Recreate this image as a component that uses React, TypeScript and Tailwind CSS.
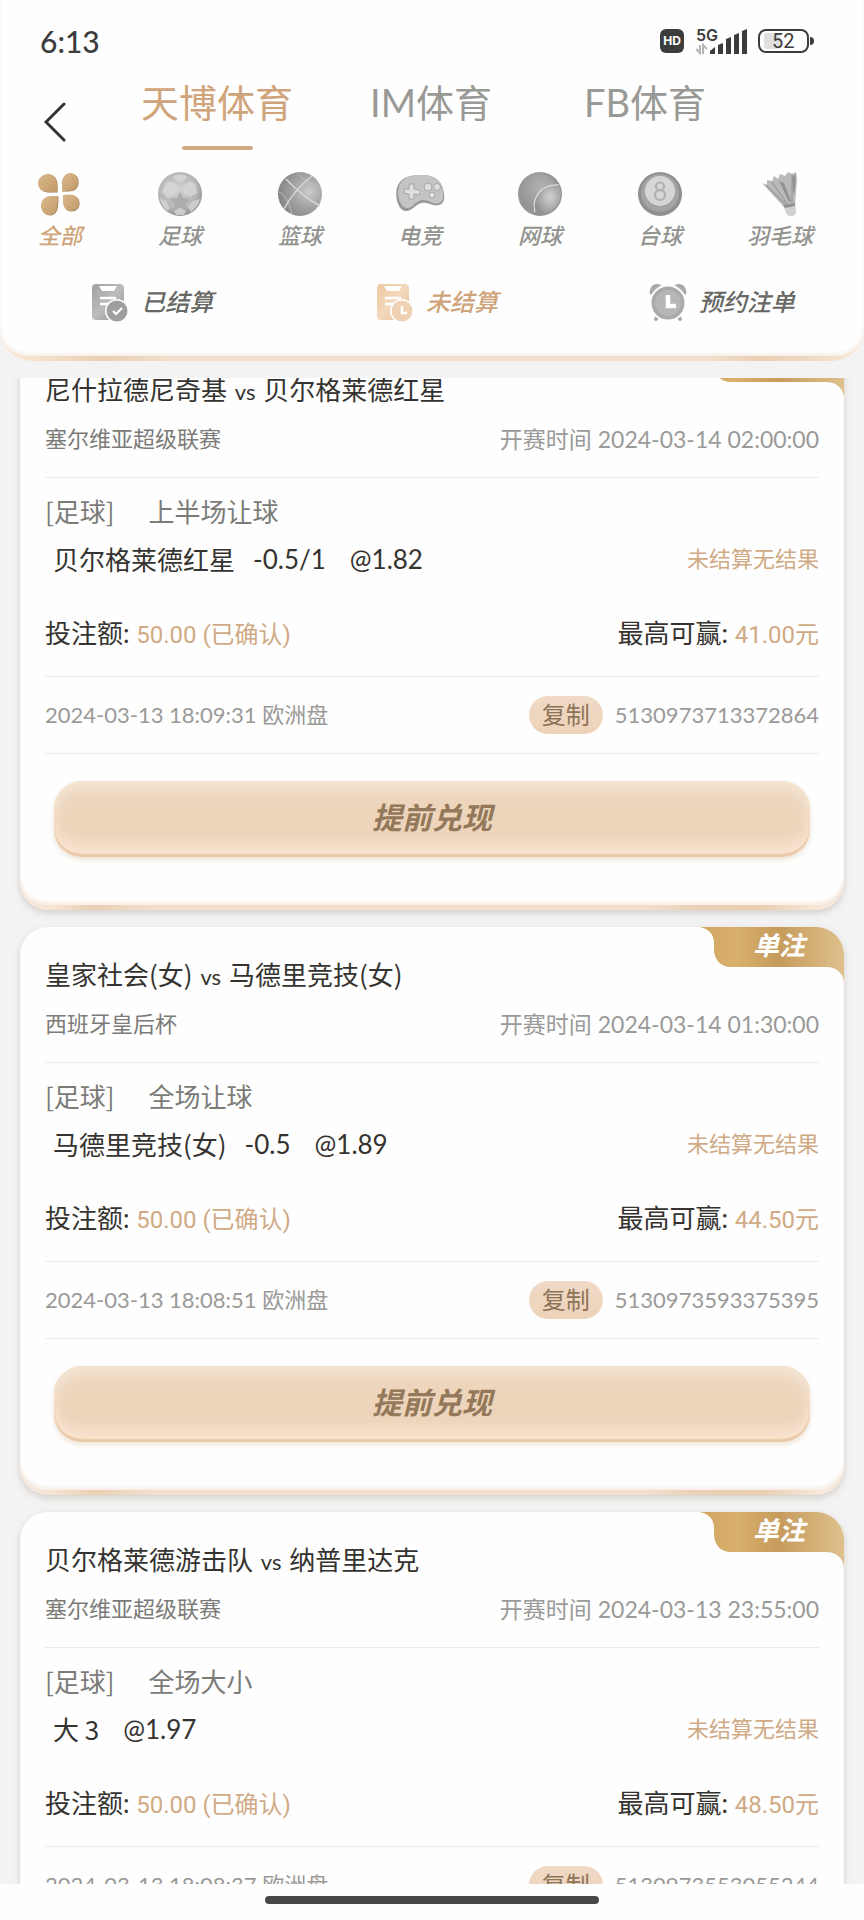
import React, { useState } from 'react';

type Bet = {
    id: string;
    home: string;
    away: string;
    league: string;
    kickoff: string;
    market: string;
    pick: string;
    handicap?: string;
    odds: string;
    stake: string;
    maxWin: string;
    placedAt: string;
};

const bets: Bet[] = [
    {
        id: '5130973713372864',
        home: '尼什拉德尼奇基',
        away: '贝尔格莱德红星',
        league: '塞尔维亚超级联赛',
        kickoff: '2024-03-14 02:00:00',
        market: '上半场让球',
        pick: '贝尔格莱德红星',
        handicap: '-0.5/1',
        odds: '@1.82',
        stake: '50.00',
        maxWin: '41.00',
        placedAt: '2024-03-13 18:09:31',
    },
    {
        id: '5130973593375395',
        home: '皇家社会(女)',
        away: '马德里竞技(女)',
        league: '西班牙皇后杯',
        kickoff: '2024-03-14 01:30:00',
        market: '全场让球',
        pick: '马德里竞技(女)',
        handicap: '-0.5',
        odds: '@1.89',
        stake: '50.00',
        maxWin: '44.50',
        placedAt: '2024-03-13 18:08:51',
    },
    {
        id: '5130973553055244',
        home: '贝尔格莱德游击队',
        away: '纳普里达克',
        league: '塞尔维亚超级联赛',
        kickoff: '2024-03-13 23:55:00',
        market: '全场大小',
        pick: '大 3',
        odds: '@1.97',
        stake: '50.00',
        maxWin: '48.50',
        placedAt: '2024-03-13 18:08:37',
    },
];

// Shared gradients, referenced by id from the icons below
const IconDefs = () => (
    <svg width="0" height="0" className="absolute" aria-hidden="true">
        <defs>
            <radialGradient id="ball" cx="0.45" cy="0.4" r="0.62">
                <stop offset="0" stopColor="#d2d2d2" />
                <stop offset="0.7" stopColor="#b6b6b6" />
                <stop offset="1" stopColor="#8e8e8e" />
            </radialGradient>
            <radialGradient id="ballDark" cx="0.7" cy="0.45" r="0.7">
                <stop offset="0" stopColor="#cccccc" />
                <stop offset="0.5" stopColor="#a4a4a4" />
                <stop offset="1" stopColor="#848484" />
            </radialGradient>
            <radialGradient id="tennis" cx="0.6" cy="0.4" r="0.6">
                <stop offset="0" stopColor="#d2d2d2" />
                <stop offset="1" stopColor="#929292" />
            </radialGradient>
            <linearGradient id="petal" x1="0" y1="0" x2="1" y2="1">
                <stop offset="0" stopColor="#dab88c" />
                <stop offset="1" stopColor="#c29a68" />
            </linearGradient>
            <linearGradient id="grayFill" x1="0" y1="0" x2="1" y2="1">
                <stop offset="0" stopColor="#a0a0a0" />
                <stop offset="0.5" stopColor="#bcbcbc" />
                <stop offset="1" stopColor="#929292" />
            </linearGradient>
            <linearGradient id="goldFill" x1="0" y1="0" x2="1" y2="1">
                <stop offset="0" stopColor="#ecc8a0" />
                <stop offset="0.5" stopColor="#f3d9bc" />
                <stop offset="1" stopColor="#e6bf94" />
            </linearGradient>
            <linearGradient id="badgeFill" x1="0" y1="0" x2="1" y2="0">
                <stop offset="0" stopColor="#cfa661" />
                <stop offset="0.25" stopColor="#d8b06c" />
                <stop offset="0.55" stopColor="#c69b5c" />
                <stop offset="1" stopColor="#dec08c" />
            </linearGradient>
        </defs>
    </svg>
);

const Icons = {
    All: () => (
        <svg viewBox="0 0 44 44" className="size-11">
            <g fill="#9a7a50" transform="translate(0.6 0.6)">
                <path d="M19 20H10C4 20 0 16 0 11C0 6 5 2 10 2C16 2 19 7 19 13Z" />
                <path d="M23.500 19V11C24 5 28 1 32 1C37 1 40 5 40 9.500C40 16 36 19 29 19Z" />
                <path d="M20 24L19.500 33C19 39 16 43 12 43C7 43 3 39 3 34C3 27 8 24 14 24Z" />
                <path d="M25 23L31 22.500C37 22.500 41 26 41 31C41 36 37 39 33 39C28 39 25 35 25 29Z" />
            </g>
            <g fill="url(#petal)">
                <path d="M19 20H10C4 20 0 16 0 11C0 6 5 2 10 2C16 2 19 7 19 13Z" />
                <path d="M24 19V11C24 5 28 1 32 1C37 1 40 5 40 9.500C40 16 36 19 29 19Z" />
                <path d="M20 24L19.500 33C19 39 16 43 12 43C7 43 3 39 3 34C3 27 8 24 14 24Z" />
                <path d="M25 23L31 22.500C37 22.500 41 26 41 31C41 36 37 39 33 39C28 39 25 35 25 29Z" />
            </g>
        </svg>
    ),
    Football: () => (
        <svg viewBox="0 0 44 44" className="size-11">
            <circle cx="22" cy="22" r="22" fill="url(#ball)" />
            <g fill="#d9d9d9" opacity="0.75">
                <path d="M8 11Q12 8 16 11L20 15L18 22L10 26L4 20Z" />
                <path d="M25 15L31 9Q36 10 38 14L39 21L32 25L26 22Z" />
                <path d="M15 4Q22 1 29 4L27 8L22 10L17 8Z" />
                <path d="M2 26L8 29L12 37L9 39Q3 33 2 26Z" />
                <path d="M30 35L35 29L42 27Q40 35 33 40Z" />
                <path d="M16 39L22 36L28 39L26 43H18Z" />
            </g>
            <path d="M22 20L25 26L32 27L27 32L28 38L22 35L16 38L17 32L12 27L19 26Z" fill="#acacac" />
        </svg>
    ),
    Basketball: () => (
        <svg viewBox="0 0 44 44" className="size-11">
            <circle cx="22" cy="22" r="22" fill="url(#ballDark)" />
            <g fill="none" stroke="#d8d8d8">
                <path d="M34 4Q16 18 6 37" strokeWidth="1.500" />
                <path d="M8 7Q24 24 42 34" strokeWidth="1.500" />
                <path d="M1 20Q10 24 14 42" opacity="0.6" />
                <path d="M20 1Q26 10 43 16" opacity="0.35" />
            </g>
        </svg>
    ),
    Gamepad: () => (
        <svg viewBox="0 0 50 44" className="h-11 w-[50px]">
            <path d="M3 13C7 5 16 3 26 3C36 3 44 6 47 14C50 22 51 31 44 33C37 35 34 30 27 31C20 32 17 40 10 39C2 37 -1 22 3 13Z" fill="#999999" />
            <path d="M5 12C9 5 17 3 26 3C36 3 43 6 46 13C49 20 50 29 44 31C37 33 34 27 27 28C20 29 18 36 12 36C4 35 1 21 5 12Z" fill="#c4c4c4" />
            <path d="M14 12H19V17L25 18V23L19 22V27H14V22L9 21V17H14Z" fill="#dedede" stroke="#a6a6a6" />
            <circle cx="33" cy="15" r="4" fill="#dedede" stroke="#a6a6a6" />
            <circle cx="42" cy="15" r="3.500" fill="#dedede" stroke="#a6a6a6" />
            <circle cx="37" cy="23" r="3" fill="#dedede" stroke="#a6a6a6" />
        </svg>
    ),
    Tennis: () => (
        <svg viewBox="0 0 44 44" className="size-11">
            <circle cx="22" cy="22" r="22" fill="#969696" />
            <circle cx="20" cy="20" r="19" fill="url(#tennis)" opacity="0.5" />
            <path d="M17 39C13 25 24 13 41 13A22 22 0 0 1 17 43Z" fill="url(#tennis)" />
            <path d="M17 40C13 25 24 12 41 13" fill="none" stroke="#dddddd" strokeWidth="1.2" />
        </svg>
    ),
    EightBall: () => (
        <svg viewBox="0 0 44 44" className="size-11">
            <circle cx="22" cy="22" r="22" fill="#8f8f8f" />
            <circle cx="22" cy="21" r="19" fill="#a4a4a4" />
            <circle cx="22" cy="19" r="15" fill="#d6d6d6" />
            <g fill="none" stroke="#b0b0b0" strokeWidth="2.200">
                <circle cx="22" cy="14.500" r="4" />
                <circle cx="22" cy="23" r="5" />
            </g>
        </svg>
    ),
    Shuttlecock: () => (
        <svg viewBox="0 0 44 46" className="h-[46px] w-11">
            <path d="M4 12L9 14L9 9L14 10L16 5L20 8L22 3L27 5L30 1L34 3L38 1L39 9L37 34L26 36Z" fill="#b9b9b9" />
            <path d="M8 14L28 34M14 11L30 34M34 3L34 33" stroke="#999999" strokeWidth="1.200" fill="none" />
            <path d="M21 10L26 12L33 30L31 31ZM34 6L38 3L37 18L35 24Z" fill="#929292" />
            <path d="M25 34L37 32L38 39Q38 45 33 45Q28 45 27 39Z" fill="#d0d0d0" />
            <path d="M25 34L37 32L37 35L27 37Z" fill="#929292" />
        </svg>
    ),
    Settled: () => (
        <svg viewBox="0 0 38 40" className="h-10 w-[38px]">
            <rect x="1" y="2" width="32" height="36" rx="4" fill="url(#grayFill)" />
            <path d="M8 4H26L23 9H11Z" fill="#ffffff" />
            <path d="M9 16H25M9 22H17" stroke="#ffffff" strokeWidth="2.500" />
            <circle cx="26" cy="29" r="12" fill="#ffffff" />
            <circle cx="26" cy="29" r="10.500" fill="#9f9f9f" />
            <path d="M22 29L25 32L31 26" stroke="#ffffff" strokeWidth="2.200" fill="none" />
        </svg>
    ),
    Unsettled: () => (
        <svg viewBox="0 0 38 40" className="h-10 w-[38px]">
            <rect x="1" y="2" width="32" height="36" rx="4" fill="url(#goldFill)" />
            <path d="M8 4H26L23 9H11Z" fill="#ffffff" />
            <path d="M9 16H25M9 22H17" stroke="#ffffff" strokeWidth="2.500" />
            <circle cx="26" cy="29" r="12" fill="#ffffff" />
            <circle cx="26" cy="29" r="10.500" fill="#efd2b3" />
            <path d="M26 24V31H31" stroke="#ffffff" strokeWidth="2.500" fill="none" />
        </svg>
    ),
    Alarm: () => (
        <svg viewBox="0 0 38 40" className="h-10 w-[38px]">
            <path d="M1 13C-1 4 7 -1 13 4ZM37 13C39 4 31 -1 25 4Z" fill="#a9a9a9" />
            <path d="M9 34L7 37M29 34L31 37" stroke="#a9a9a9" strokeWidth="4" strokeLinecap="round" />
            <circle cx="19" cy="21" r="17.500" fill="#aaaaaa" stroke="#fefefe" strokeWidth="2" />
            <circle cx="19" cy="21" r="13" fill="#b6b6b6" />
            <path d="M19 13V24H27" stroke="#ffffff" strokeWidth="4.500" fill="none" />
        </svg>
    ),
};

const brands = ['天博体育', 'IM体育', 'FB体育'];

const sports = [
    { name: '全部', Icon: Icons.All },
    { name: '足球', Icon: Icons.Football },
    { name: '篮球', Icon: Icons.Basketball },
    { name: '电竞', Icon: Icons.Gamepad },
    { name: '网球', Icon: Icons.Tennis },
    { name: '台球', Icon: Icons.EightBall },
    { name: '羽毛球', Icon: Icons.Shuttlecock },
];

const filters = [
    { name: '已结算', Icon: Icons.Settled },
    { name: '未结算', Icon: Icons.Unsettled },
    { name: '预约注单', Icon: Icons.Alarm },
];

const StatusBar = () => (
    <div className="flex h-[82px] items-center justify-between pl-10 pr-[50px] text-[#3c3c3c]">
        <span className="text-[30px] leading-9 font-medium">6:13</span>
        <div className="flex items-center">
            <span className="flex h-6 w-6 items-center justify-center rounded-md bg-[#3c3c3c] font-[Inter] text-[12px] font-bold text-white">HD</span>
            <div className="relative ml-3 h-7 w-[51px]">
                <span className="absolute left-0 top-0 font-[Inter] text-[16px] leading-4 font-semibold">5G</span>
                <svg viewBox="0 0 51 28" className="h-7 w-[51px]">
                    <path d="M4 18V26L0 22M7 27V18L11 22" stroke="#b4b4b4" strokeWidth="2" fill="none" />
                    <g fill="#3c3c3c">
                        <path d="M14 24L19 20V27H14Z" />
                        <path d="M22 18L27 16V27H22Z" />
                        <path d="M30 12L35 10V27H30Z" />
                        <path d="M38 8L43 6V27H38Z" />
                        <path d="M46 4L51 2V27H46Z" />
                    </g>
                </svg>
            </div>
            <div className="ml-[11px] flex h-6 w-[51px] items-center rounded-lg border-2 border-[#3c3c3c] px-1">
                <span className="h-4 w-4 rounded-xs bg-[#e0e0e0]" />
                <span className="-ml-2 font-[Roboto] text-[20px] leading-5">52</span>
            </div>
            <span className="ml-px h-2 w-1 rounded-r-sm bg-[#3c3c3c]" />
        </div>
    </div>
);

const Divider = () => <hr className="border-0 border-t border-solid border-[#ebebeb]" />;

export const BetCard = ({ bet }: { bet: Bet }) => {
    return (
        <li className="rounded-[28px] bg-[linear-gradient(90deg,#f6ebe0_0%,#f6e4d3_4%,#e9cfb3_9%,#f3dfce_16%,#f3dfce_76%,#ead0b6_82%,#e9ceb2_90%,#f6e8da_97%)] pb-[5px] shadow-[0_3px_7px_rgba(120,100,80,0.25)]">
            <div className="relative overflow-hidden rounded-[28px] bg-[#fefefe] px-[25px] pt-[29px] pb-12 shadow-[inset_0_-3px_3px_#f8f0e9]">
                <div className="absolute right-0 top-0 h-[55px] w-[145px]">
                    <svg viewBox="0 0 145 55" className="h-full w-full">
                        <path d="M0 0C9 1 15 7 15 16V22C15 33 22 40 32 40H127C137 40 144 46 145 55V0Z" fill="url(#badgeFill)" />
                    </svg>
                    <span className="absolute right-[39px] top-0 text-[26px] leading-9 font-bold text-white italic">单注</span>
                </div>

                <h3 className="font-['Noto_Sans_CJK_SC',sans-serif] text-[26px] leading-9 text-[#35332f]">
                    {bet.home} <span className="mx-0.5 font-[Lato] text-[22px]">vs</span> {bet.away}
                </h3>
                <div className="mt-[15px] mb-6 flex items-center justify-between leading-7">
                    <span className="text-[22px] text-[#7b7b78]">{bet.league}</span>
                    <span className="text-[23px] text-[#9a9a98]">开赛时间 {bet.kickoff}</span>
                </div>
                <Divider />

                <div className="mt-[15px] flex gap-[34px] font-['Noto_Sans_CJK_SC',sans-serif] text-[26px] leading-9 text-[#7b7b78]">
                    <span>[足球]</span>
                    <span>{bet.market}</span>
                </div>
                <div className="mt-3 flex items-center justify-between pl-2">
                    <p className="flex text-[26px] leading-9 text-[#35332f]">
                        <span className="font-['Noto_Sans_CJK_SC',sans-serif]">{bet.pick}</span>
                        {bet.handicap && <span className="ml-[18px]">{bet.handicap}</span>}
                        <span className="ml-6">{bet.odds}</span>
                    </p>
                    <span className="text-[22px] leading-9 text-[#d0aa85]">未结算无结果</span>
                </div>

                <div className="mt-[38px] mb-[23px] flex justify-between text-[26px] leading-9 text-[#35332f]">
                    <p>
                        投注额: <span className="font-[Roboto,'Noto_Sans_CJK_SC',sans-serif] text-[24px] text-[#d0aa85]">{bet.stake} (已确认)</span>
                    </p>
                    <p>
                        最高可赢: <span className="font-[Roboto,'Noto_Sans_CJK_SC',sans-serif] text-[24px] text-[#d0aa85]">{bet.maxWin}元</span>
                    </p>
                </div>
                <Divider />

                <div className="my-[19px] flex h-[38px] items-center text-[22px] leading-[38px] text-[#9a9a98]">
                    <span className="mr-auto">{bet.placedAt} 欧洲盘</span>
                    <button type="button" className="mr-3 h-[38px] rounded-full bg-linear-to-b from-[#efdac6] to-[#eed2b9] px-[13px] text-[24px] leading-9 text-[#8d7358]">
                        复制
                    </button>
                    <span>{bet.id}</span>
                </div>
                <Divider />

                <div className="mt-[27px] px-[9px]">
                    <button
                        type="button"
                        className="block h-[76px] w-full rounded-[28px] bg-[#edd5bc] pb-1 text-[30px] font-bold text-[#94785a] italic shadow-[inset_0_-3px_1px_#e8caa8,inset_0_-16px_12px_-4px_#fae3d0,inset_0_12px_14px_-4px_#f3e5d5,inset_0_0_10px_#f5e0cb,0_3px_5px_rgba(214,180,145,0.35)]"
                    >
                        提前兑现
                    </button>
                </div>
            </div>
        </li>
    );
};

export default function App() {
    const [brand, setBrand] = useState('天博体育');
    const [sport, setSport] = useState('全部');
    const [filter, setFilter] = useState('未结算');

    return (
        <div lang="zh-CN" className="flex h-screen flex-col bg-[#f3f3f3] font-[Lato,'Noto_Sans_CJK_SC',sans-serif]">
            <IconDefs />
            <header className="rounded-b-[32px] bg-[linear-gradient(90deg,#f8eadb_0%,#f6e2cc_4%,#e9cfb3_12%,#f3dfcd_20%,#f3dfcd_82%,#e9ceb2_88%,#f0dac4_94%,#f8eadb_100%)] pb-[5px]">
                <div className="rounded-b-[28px] bg-[#fefefe] pb-[34px] shadow-[inset_0_-3px_3px_#f8f2ec]">
                    <StatusBar />
                    <nav className="flex items-end">
                        <button type="button" aria-label="返回" className="flex h-14 w-[110px] items-center pl-11">
                            <svg viewBox="0 0 22 40" className="h-10 w-[22px]">
                                <path d="M20 2L2 20L20 38" fill="none" stroke="#333333" strokeWidth="3" strokeLinecap="round" />
                            </svg>
                        </button>
                        <div className="mr-[112px] grid flex-1 grid-cols-3">
                            {brands.map((name) => (
                                <button key={name} type="button" onClick={() => setBrand(name)} className="flex flex-col items-center">
                                    <span className={`text-[38px] leading-10 ${name === brand ? 'text-[#d0a47a]' : 'text-[#999996]'}`}>{name}</span>
                                    <span className={`mt-6 h-1 w-[71px] rounded-full ${name === brand ? 'bg-[#cfa981]' : 'bg-transparent'}`} />
                                </button>
                            ))}
                        </div>
                    </nav>

                    <div className="mt-[22px] grid grid-cols-7 pr-6">
                        {sports.map(({ name, Icon }) => (
                            <button key={name} type="button" onClick={() => setSport(name)} className="flex flex-col items-center gap-1.5">
                                <span className="flex h-11 items-center">
                                    <Icon />
                                </span>
                                <span className={`text-[22px] leading-7 font-medium italic ${name === sport ? 'text-[#d0a47a]' : 'text-[#92928e]'}`}>{name}</span>
                            </button>
                        ))}
                    </div>

                    <div className="mt-8 grid grid-cols-3 pl-2.5">
                        {filters.map(({ name, Icon }) => (
                            <button key={name} type="button" onClick={() => setFilter(name)} className="flex h-10 items-center justify-center gap-3">
                                <Icon />
                                <span className={`text-[24px] leading-10 font-medium italic ${name === filter ? 'text-[#d0a47a]' : 'text-[#676764]'}`}>{name}</span>
                            </button>
                        ))}
                    </div>
                </div>
            </header>

            <main className="mt-[17px] min-h-0 flex-1 overflow-hidden">
                <ul className="-mt-9 flex flex-col gap-[17px] px-5">
                    {bets.map((bet) => (
                        <BetCard key={bet.id} bet={bet} />
                    ))}
                </ul>
            </main>

            <footer className="flex h-9 shrink-0 justify-center bg-[#fefefe] pt-3">
                <div className="h-2 w-[334px] rounded-full bg-[#474747]" />
            </footer>
        </div>
    );
}
